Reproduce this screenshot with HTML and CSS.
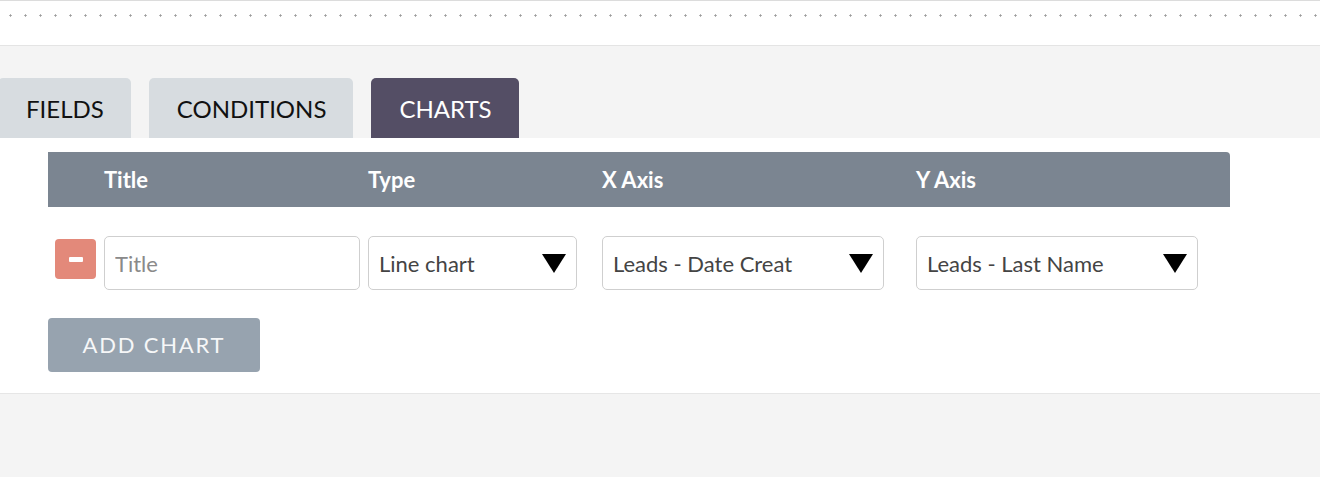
FILE: index.html
```html
<!DOCTYPE html>
<html>
<head>
<meta charset="utf-8">
<link rel="stylesheet" href="styles.css">
</head>
<body>
<div class="topbar"><div class="dots"></div></div>
<div class="tabs">
  <div class="tab">FIELDS</div>
  <div class="tab">CONDITIONS</div>
  <div class="tab active">CHARTS</div>
</div>
<div class="panel">
  <div class="grid head">
    <div></div>
    <div>Title</div>
    <div>Type</div>
    <div>X Axis</div>
    <div>Y Axis</div>
  </div>
  <div class="grid row">
    <div class="minus-cell"><button class="minus"><span></span></button></div>
    <div><input class="field title" placeholder="Title"></div>
    <div><div class="field sel w-type"><span>Line chart</span><svg width="24" height="19" viewBox="0 0 24 19"><polygon points="0,0 24,0 12,19" fill="#000"/></svg></div></div>
    <div><div class="field sel w-axis"><span>Leads - Date Creat</span><svg width="24" height="19" viewBox="0 0 24 19"><polygon points="0,0 24,0 12,19" fill="#000"/></svg></div></div>
    <div><div class="field sel w-axis"><span>Leads - Last Name</span><svg width="24" height="19" viewBox="0 0 24 19"><polygon points="0,0 24,0 12,19" fill="#000"/></svg></div></div>
  </div>
  <div class="actions"><button class="add">ADD CHART</button></div>
</div>
</body>
</html>
```
FILE: styles.css
```css
* { box-sizing: border-box; }
html, body { margin: 0; padding: 0; }
body {
  background: #f4f4f4;
  font-family: Lato, "Open Sans", sans-serif;
  height: 477px;
  overflow: hidden;
}
.topbar {
  height: 46px;
  background: #fff;
  border-top: 1px solid #dcdcdc;
  border-bottom: 1px solid #e4e4e4;
  padding-top: 13px;
}
.dots {
  height: 3px;
  margin-left: 3px;
  background-image: radial-gradient(circle, #9a9a9a 0.9px, transparent 1.3px);
  background-size: 15px 3px;
  background-position: 0 0;
}
.tabs {
  display: flex;
  gap: 18px;
  padding-top: 32px;
  margin-left: -2px;
}
.tab {
  height: 60px;
  padding: 0 27px 0 28px;
  display: flex;
  align-items: center;
  background: #d7dce0;
  color: #111;
  font-size: 24px;
  border-radius: 5px 5px 0 0;
}
.tab.active {
  background: #544e65;
  color: #fff;
}
.panel {
  background: #fff;
  border-bottom: 1px solid #e6e6e6;
  padding: 14px 0 21px 48px;
}
.grid {
  display: grid;
  grid-template-columns: 56px 264px 234px 314px 314px;
  align-items: center;
}
.head {
  height: 55px;
  width: 1182px;
  background: #7b8591;
  color: #fff;
  font-weight: 700;
  font-size: 22px;
  border-radius: 0 4px 0 0;
}
.row {
  margin-top: 29px;
}
.minus-cell {
  align-self: start;
  padding-top: 3px;
}
.minus {
  margin-left: 7px;
  width: 41px;
  height: 40px;
  border: none;
  border-radius: 4px;
  background: #e3897a;
  display: flex;
  align-items: center;
  justify-content: center;
  padding: 0;
}
.minus span {
  display: block;
  width: 14px;
  height: 5px;
  background: #fff;
  border-radius: 1px;
}
.field {
  height: 54px;
  border: 1px solid #cfcfcf;
  border-radius: 5px;
  background: #fff;
  font-family: Lato, sans-serif;
  font-size: 22px;
  color: #444;
}
.title {
  width: 256px;
  padding: 0 10px;
  outline: none;
}
.title::placeholder { color: #8a8a8a; }
.sel {
  display: flex;
  align-items: center;
  justify-content: space-between;
  padding: 0 10px 0 10px;
}
.w-type { width: 209px; }
.w-axis { width: 282px; }
.sel svg { margin-top: 1px; }
.actions { margin-top: 28px; }
.add {
  width: 212px;
  height: 54px;
  border: none;
  border-radius: 4px;
  background: #97a3af;
  color: #f6f7f8;
  font-family: Lato, sans-serif;
  font-size: 22px;
  letter-spacing: 1.8px;
  padding: 0 0 1px 0;
}
```
